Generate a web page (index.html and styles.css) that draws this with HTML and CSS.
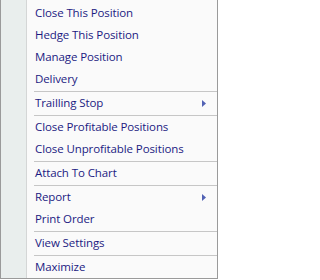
FILE: index.html
```html
<!DOCTYPE html>
<html>
<head>
<meta charset="utf-8">
<link rel="stylesheet" href="styles.css">
</head>
<body>
<div class="menu">
  <ul class="items">
    <li class="item"><span class="label">Close This Position</span></li>
    <li class="item"><span class="label">Hedge This Position</span></li>
    <li class="item"><span class="label">Manage Position</span></li>
    <li class="item"><span class="label">Delivery</span></li>
    <li class="sep"></li>
    <li class="item"><span class="label">Trailling Stop</span><svg class="arrow" width="4" height="7" viewBox="0 0 4 7"><polygon points="0,0 4,3.5 0,7" fill="#5262b4"/></svg></li>
    <li class="sep"></li>
    <li class="item"><span class="label">Close Profitable Positions</span></li>
    <li class="item"><span class="label">Close Unprofitable Positions</span></li>
    <li class="sep"></li>
    <li class="item"><span class="label">Attach To Chart</span></li>
    <li class="sep"></li>
    <li class="item"><span class="label">Report</span><svg class="arrow" width="4" height="7" viewBox="0 0 4 7"><polygon points="0,0 4,3.5 0,7" fill="#5262b4"/></svg></li>
    <li class="item"><span class="label">Print Order</span></li>
    <li class="sep"></li>
    <li class="item"><span class="label">View Settings</span></li>
    <li class="sep"></li>
    <li class="item"><span class="label">Maximize</span></li>
  </ul>
</div>
</body>
</html>
```

FILE: styles.css
```css
html, body {
  margin: 0;
  padding: 0;
  background: #ffffff;
}

.menu {
  width: 218px;
  height: 279px;
  box-sizing: border-box;
  border-left: 1px solid #9a9a9a;
  border-right: 1px solid #9a9a9a;
  border-bottom: 1px solid #9a9a9a;
  padding: 2px 0 1px 0;
  background: linear-gradient(to right, #e9eeed 0, #e9eeed 25px, #d4d6d6 25px, #d4d6d6 26px, #fafafa 26px);
  font-family: "Open Sans", "Noto Sans", sans-serif;
  font-size: 11.5px;
  letter-spacing: -0.1px;
  color: #1c1a82;
}

.items {
  list-style: none;
  margin: 0;
  padding: 0;
}

.item {
  height: 22px;
  display: flex;
  align-items: center;
  justify-content: space-between;
  padding: 0 11px 0 34px;
}

.label {
  white-space: nowrap;
  line-height: 22px;
}

.arrow {
  display: block;
}

.sep {
  height: 1px;
  margin: 1px 0 0 33px;
  background: #c6c6c6;
}
```
